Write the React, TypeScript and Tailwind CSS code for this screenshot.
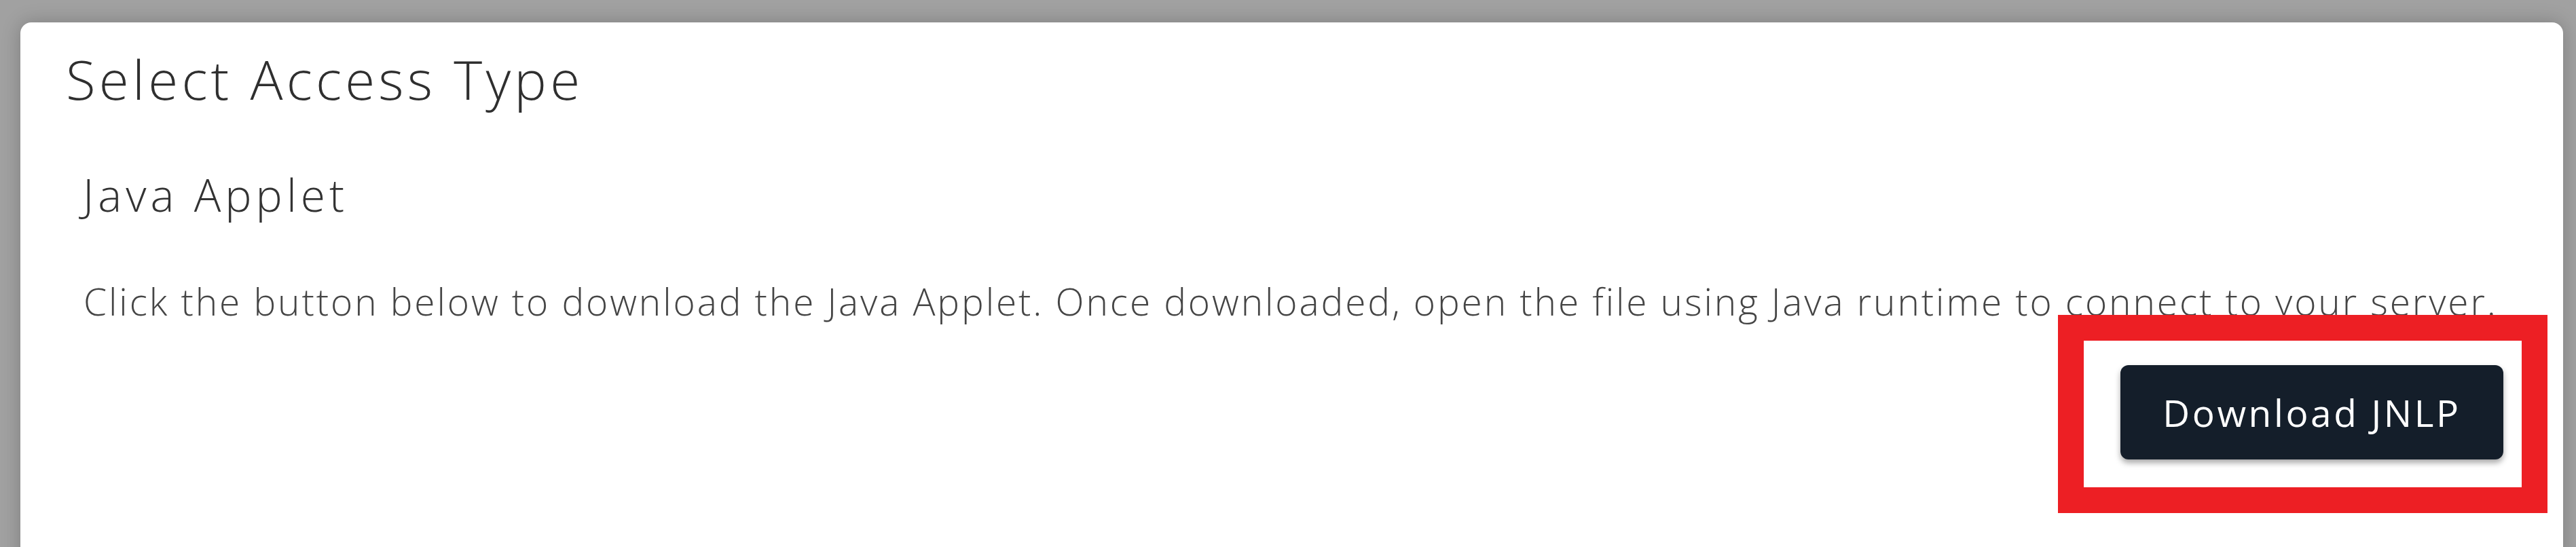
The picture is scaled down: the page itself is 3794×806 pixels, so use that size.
export default function App(): JSX.Element {
  return (
    <div className="relative h-[806px] w-[3794px] overflow-hidden bg-[#a1a1a1] pl-[30px] pr-[19px] pt-[33px] font-['Open_Sans',sans-serif]">
      {/* Dialog card */}
      <div className="flex h-[800px] flex-col rounded-t-[16px] bg-white pl-[67px] pr-[88px] pt-[43px] shadow-[0_0_28px_rgba(0,0,0,0.22)]">
        <h2 className="text-[80px] leading-none font-light tracking-[5.2px] text-[#2f2f2f]">Select Access Type</h2>

        <h3 className="ml-[25px] mt-[97px] text-[66px] leading-none font-light tracking-[6px] text-[#333]">Java Applet</h3>

        <p className="ml-[26px] mt-[97px] text-[55px] leading-none font-light tracking-[2.9px] text-[#454545]">
          Click the button below to download the Java Applet. Once downloaded, open the file using Java runtime to connect to your server.
        </p>

        <div className="mt-[67px] flex justify-end">
          <button
            type="button"
            className="flex h-[139px] w-[564px] items-center justify-center rounded-[12px] bg-[#141e2a] text-[55px] leading-none font-normal tracking-[3.6px] text-white shadow-[0_5px_8px_rgba(0,0,0,0.35)]"
          >
            Download JNLP
          </button>
        </div>
      </div>

      {/* Highlight annotation */}
      <div className="pointer-events-none absolute left-[3031px] top-[464px] h-[292px] w-[721px] border-[38px] border-[#ed1f24]" />
    </div>
  )
}
